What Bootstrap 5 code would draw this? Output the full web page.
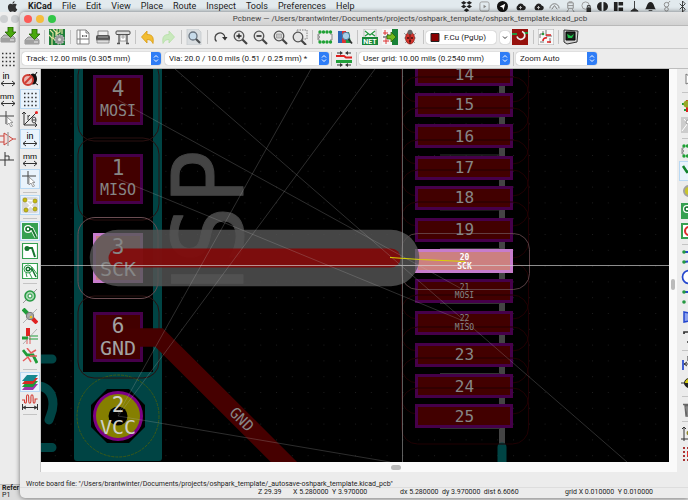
<!DOCTYPE html>
<html lang="en">
<head>
<meta charset="utf-8">
<meta name="viewport" content="width=device-width, initial-scale=1">
<title>Pcbnew</title>
<link href="https://cdn.jsdelivr.net/npm/bootstrap@5.3.0/dist/css/bootstrap.min.css" rel="stylesheet">
<style>
body{font-family:Roboto,"Liberation Sans",sans-serif;font-size:8px;line-height:12px;color:#222;background:#d4d4d4}
button{border:0;padding:0;background:none;color:inherit}
.menubar{height:12px;background:#e2eaee;font-size:9px;line-height:10px;color:#1c1c1c;padding-left:7px}
.menubar a{color:inherit;text-decoration:none}
.menu-names{gap:10px;margin-left:10px}
.menu-extras{gap:5px}
.menu-extras svg,.apple{width:11px;height:11px;display:block}
.menu-extras svg:nth-child(-n+4){margin-right:2px}
.back-win{background:linear-gradient(90deg,#ececec 60%,#bdbdbd)}
.back-side{width:20px}
.back-title{height:15px;background:#eee;gap:3px;padding-top:3px}
.dot{width:8px;height:8px;border-radius:50%}
.back-tool{height:16px;margin-bottom:4px;width:16px}
.back-tool svg{width:16px;height:16px;display:block}
.back-list{font-size:7px;line-height:7px;background:#dcdcdc;height:16px;border-top:1px solid #bbb;padding-left:2px}
.front-win{left:20px;right:0;top:12px;bottom:2px;background:#ececec;border-radius:5px 0 0 5px;box-shadow:0 0 5px #0008;overflow:hidden}
.titlebar{height:14px;background:linear-gradient(#e4e4e4,#d2d2d2);border-bottom:1px solid #b9b9b9;padding-left:4px;color:#444}
.win-name{padding-left:76px}
.toolrow{height:22px;padding-left:2px}
.optrow{height:21px;border-top:1px solid #cacaca;border-bottom:1px solid #bdbdbd;padding-left:2px}
.tool{width:20px;height:20px;flex:none;display:flex;align-items:center;justify-content:center;border:1px solid transparent}
.tool svg{width:16px;height:16px;display:block;flex:none}
.tool.on{background:#e9f3fc;border-color:#b9d9f4}
.bar-a,.bar-b{flex:none;display:flex;align-items:center;justify-content:center}
.bar-a{width:5px}.bar-b{width:6px}
.bar-a::after,.bar-b::after{content:"";width:1px;height:14px;background:#c4c4c4}
.vtools .bar-a,.vtools .bar-b{width:20px}
.vtools .bar-a{height:5px}.vtools .bar-b{height:6px}
.vtools .bar-a::after,.vtools .bar-b::after{width:14px;height:1px}
.vtools{background:#ececec}
.left-tools{width:21px;border-right:1px solid #c8c8c8}
.right-tools{width:11px;overflow:hidden;padding-left:2px}
.combo{height:13px;background:#fff;border-radius:3px;box-shadow:0 0 1px #0007;display:flex;overflow:hidden}
.combo select{appearance:none;border:0;background:transparent;padding:0 0 0 4px;font-size:8px;line-height:13px;color:#1c1c1c;min-width:0;flex:1}
.combo svg{width:10px;height:13px;flex:none}
.w-track{width:139px}.w-via{width:164px}.w-grid{width:151px}.w-zoom{width:81px}.w-layer{width:70px}
.board{background:#000;min-width:0}
.board svg{display:block;width:100%;height:100%}
.canvas-col{min-width:0}
.vscroll{width:8px;background:#fafafa;padding-top:210px}
.vscroll span{display:block;width:4px;height:11px;border-radius:2px;background:#bbb;margin:auto}
.hscroll{height:10px;background:#fafafa;padding-top:3px}
.hscroll span{display:block;width:10px;height:5px;border-radius:3px;background:#bbb;margin-left:55%}
.status{height:26px;font-size:7px;line-height:8px;color:#222}
.status div,.status span{white-space:pre}
.message{height:16px;padding:8px 0 0 6px;border-bottom:1px solid #ddd}
.coords{padding-left:238px}
.c-z{width:35px}.c-xy{width:107px}.c-d{width:165px}
.pcb{font-family:"DejaVu Sans Mono",monospace;text-anchor:middle;fill:#868686}
.silk{font-family:"DejaVu Sans Condensed","DejaVu Sans",sans-serif;font-size:98px}
</style>
<script src="https://cdn.jsdelivr.net/npm/bootstrap@5.3.0/dist/js/bootstrap.bundle.min.js"></script>
</head>
<body class="vh-100 d-flex flex-column overflow-hidden position-relative">
<svg class="d-none" aria-hidden="true">
<defs>
<symbol id="save" viewBox="0 0 16 16"><path d="M4 8h8l3 3v4H1v-4z" fill="#b9b9b9" stroke="#777" stroke-width=".7"/><path d="M1 11h14v4H1z" fill="#a0a0a0"/><path d="M10 13h4" stroke="#eee"/><path d="M8 0h5v5h3l-5.500 5.500L5 5h3z" fill="#4aa80c" stroke="#1e5c00" stroke-width=".8"/></symbol>
<symbol id="boardset" viewBox="0 0 16 16"><path d="M0 0h16v16H0z" fill="#1d7d38"/><path d="M1 1l3 3v5l3 3M4 0l3 3v4M8 0v5l3-2V0M13 0v5M0 6l3 3v7" stroke="#e5e2a0" stroke-width="1.200" fill="none"/><circle cx="10.500" cy="10.500" r="4.500" fill="#999" stroke="#bbb" stroke-width="1.500" stroke-dasharray="1.500 1"/><circle cx="10.500" cy="10.500" r="1.500" fill="#ddd"/></symbol>
<symbol id="page" viewBox="0 0 16 16"><path d="M2 1h9l3 3v11H2z" fill="#fff" stroke="#888"/><path d="M11 1v3h3M5 1v14M2 10h12" stroke="#777" fill="none"/><path d="M7 7h5M8 6l-1 1 1 1M11 6l1 1-1 1" stroke="#555" fill="none" stroke-width=".8"/></symbol>
<symbol id="print" viewBox="0 0 16 16"><path d="M3 2h10v5H3z" fill="#eee" stroke="#888"/><rect x="1" y="6" width="14" height="6" rx="2" fill="#555"/><path d="M2 11h12v3H2z" fill="#ddd" stroke="#777" stroke-width=".7"/><path d="M3 8h10" stroke="#aaa"/></symbol>
<symbol id="plot" viewBox="0 0 16 16"><rect x="1" y="2" width="14" height="3.500" rx="1" fill="#ddd" stroke="#444"/><path d="M4 5v9M12 5v9M2 14.500h3M11 14.500h3" stroke="#555" stroke-width="1.300"/><path d="M5 6h6v6H5z" fill="#fff" stroke="#777" stroke-width=".7"/><path d="M6 8h4M8 6v4" stroke="#888" stroke-width=".7"/></symbol>
<symbol id="undo" viewBox="0 0 16 16"><path d="M7 2v3.500c5 0 7 2 6 9-1.500-3-3-4-6-4V14L1.500 8z" fill="#f2bd33" stroke="#d89a12" stroke-width=".8"/></symbol>
<symbol id="find" viewBox="0 0 16 16"><path d="M1 0h11l3 3v13H1z" fill="#d9dde0" stroke="#c3c7ca" stroke-width=".7"/><circle cx="7" cy="7" r="4" fill="#c7dbea" stroke="#697480" stroke-width="1.300"/><path d="M10 10l4 4" stroke="#4d5154" stroke-width="2.200"/></symbol>
<symbol id="refresh" viewBox="0 0 16 16"><path d="M4.500 12.500A5 5 0 1 1 13 9" fill="none" stroke="#444" stroke-width="1.300"/><path d="M10 8h5.500L13 11.500z" fill="#333"/></symbol>
<symbol id="lens" viewBox="0 0 16 16"><circle cx="7" cy="7" r="4.800" fill="#e4e4e4" stroke="#555" stroke-width="1.300"/><path d="M10.500 10.500L15 15" stroke="#444" stroke-width="2.200"/></symbol>
<symbol id="zin" viewBox="0 0 16 16"><use href="#lens"/><path d="M4.500 7h5M7 4.500v5" stroke="#222" stroke-width="1.300"/></symbol>
<symbol id="zout" viewBox="0 0 16 16"><use href="#lens"/><path d="M4.500 7h5" stroke="#222" stroke-width="1.300"/></symbol>
<symbol id="zfit" viewBox="0 0 16 16"><use href="#lens"/><path d="M4.500 5h5v4h-5z" fill="#c4c4c4" stroke="#999" stroke-width=".7"/></symbol>
<symbol id="zsel" viewBox="0 0 16 16"><path d="M5 1h10v9H5z" fill="none" stroke="#666" stroke-width=".8" stroke-dasharray="1.500 1"/><use href="#lens" y="1" x="-1"/></symbol>
<symbol id="chip" viewBox="0 0 16 16"><path d="M3 5H1v6h2M13 5h2v6h-2M1 6.500a1.500 1.500 0 0 1 0 3" fill="none" stroke="#888"/><g fill="#1fa135"><circle cx="3" cy="3" r="1.700"/><circle cx="6.500" cy="3" r="1.700"/><circle cx="10" cy="3" r="1.700"/><circle cx="13.500" cy="3" r="1.700"/><circle cx="3" cy="13" r="1.700"/><circle cx="6.500" cy="13" r="1.700"/><circle cx="10" cy="13" r="1.700"/><circle cx="13.500" cy="13" r="1.700"/></g></symbol>
<symbol id="lib" viewBox="0 0 16 16"><path d="M1 2h4v12H1z" fill="#2c65b8"/><path d="M5 2h4v12H5z" fill="#d33"/><path d="M8 4l4-1 2 11h-5z" fill="#1d9a44"/><circle cx="9" cy="7" r="3.700" fill="#a8cee8" stroke="#5077a0"/><path d="M11.500 10l3.500 4.500" stroke="#333" stroke-width="1.800"/></symbol>
<symbol id="net" viewBox="0 0 16 16"><path d="M2 0h12v10H2z" fill="#f3f3f3" stroke="#aaa" stroke-width=".7"/><path d="M3 2l5 4 5-4M3 7l3-2M13 7l-3-2" fill="none" stroke="#279941" stroke-width="1.300"/><path d="M0 8h16v8H0z" fill="#198838"/></symbol>
<symbol id="update" viewBox="0 0 16 16"><path d="M0 0h16v16H0z" fill="#f5f5f5"/><path d="M10 0h6v16h-6z" fill="#188137"/><path d="M1 4h5M3 1v5M1 12h6M4 9v6" stroke="#d33"/><path d="M1 8h4l1-3" stroke="#333" fill="none"/><path d="M5 6h4V3l5 5-5 5v-3H5z" fill="#73b91c" stroke="#245c05" stroke-width=".7"/></symbol>
<symbol id="bug" viewBox="0 0 16 16"><path d="M2 4l3 3M14 4l-3 3M2 9h12M3 14l3-3M13 14l-3-3" stroke="#888" stroke-width=".8"/><ellipse cx="8" cy="9" rx="4.500" ry="6" fill="#d2342c" stroke="#8a1814" stroke-width=".7"/><circle cx="8" cy="3.200" r="2.500" fill="#666"/><path d="M8 5v10" stroke="#611"/><circle cx="6" cy="9" r="1" fill="#411"/><circle cx="10" cy="9" r="1" fill="#411"/><circle cx="8" cy="12" r="1" fill="#411"/></symbol>
<symbol id="via" viewBox="0 0 16 16"><path d="M0 0h16v16H0z" fill="#97120e"/><path d="M0 4h5v2H0zM11 3h5v2h-5z" fill="#24953c"/><path d="M10 2.500a4 4 0 1 1-5 5" fill="none" stroke="#eee" stroke-width="1.700"/></symbol>
<symbol id="route" viewBox="0 0 16 16"><path d="M0 0h16v16H0z" fill="#f8f8f8" stroke="#aaa"/><path d="M5 2v3H2v4M8 1v6h6M2 13h4M12 9v5" stroke="#555" fill="none" stroke-width=".8"/><path d="M8 6h5M5 12a3 3 0 0 1 4-3M9 13h4" stroke="#d22" stroke-width="1.700" fill="none"/><circle cx="5" cy="5" r="1.300" fill="#2a9a3a"/></symbol>
<symbol id="term" viewBox="0 0 16 16"><path d="M1 1l14 1-1 11-10 2-3-2z" fill="#d0d0d0" stroke="#333"/><path d="M3 3h9v8H3z" fill="#19251b" stroke="#000"/><path d="M4 5l4 2 3-2-2 4H5z" fill="#1ec24a"/></symbol>
<symbol id="pair" viewBox="0 0 16 16"><path d="M0 5h8l2 1.500h6" fill="none" stroke="#e02020" stroke-width="2"/><path d="M0 10.500h16" fill="none" stroke="#22a03a" stroke-width="3"/><path d="M1 2h4M11 2h4M1 14h4M11 14h4" stroke="#333"/><path d="M4 0l3 2-3 2zM12 0L9 2l3 2zM4 12l3 2-3 2zM12 12l-3 2 3 2z" fill="#333"/></symbol>
<symbol id="nobug" viewBox="0 0 16 16"><path d="M7 3l2 2M15 1l-2 3M15 8h-4M16 14l-4-3" stroke="#111"/><ellipse cx="11" cy="8" rx="4" ry="5.500" fill="#111"/><circle cx="6" cy="9" r="5" fill="#e9b5b1" stroke="#cf3b32" stroke-width="2"/><path d="M3 12l6-6" stroke="#cf3b32" stroke-width="2"/></symbol>
<symbol id="dots" viewBox="0 0 16 16"><path d="M2 2.500h13M2 6.500h13M2 10.500h13M2 14.500h13" stroke="#333" stroke-width="1.500" stroke-dasharray="1.500 2.200"/></symbol>
<symbol id="polar" viewBox="0 0 16 16"><path d="M2 1v13h13M0 3l2-2 2 2M13 12l2 2-2 2M2 14L14 2" fill="none" stroke="#333"/><path d="M6 9V4M6 6l2-2" stroke="#444"/><ellipse cx="12" cy="9" rx="2" ry="3" fill="none" stroke="#444"/><path d="M10 9h4" stroke="#444"/><circle cx="14.500" cy="1.500" r="1.500" fill="#e22"/></symbol>
<symbol id="span" viewBox="0 0 16 16"><path d="M1 12.500h14M4 10l-3 2.500L4 15M12 10l3 2.500-3 2.500" fill="none" stroke="#333"/></symbol>
<symbol id="cursor" viewBox="0 0 16 16"><path d="M0 5h14M6 0v13" stroke="#444"/><path d="M7 6v8l2-2 2 4 1.500-1-2-3.500H13z" fill="#fff" stroke="#888" stroke-width=".8"/></symbol>
<symbol id="rats" viewBox="0 0 16 16"><rect width="16" height="16" rx="2" fill="#d9d9d9"/><path d="M3 3l10 10M13 4L4 13M3 3l10 1" stroke="#fff" stroke-width="1.300"/><g fill="#c9bd0c" stroke="#888100" stroke-width=".6"><circle cx="3" cy="3" r="2"/><circle cx="13" cy="4" r="2"/><circle cx="4" cy="13" r="2"/><circle cx="13" cy="12" r="2"/></g></symbol>
<symbol id="zone1" viewBox="0 0 16 16"><path d="M0 0h16v16H0z" fill="#36a050"/><path d="M6 6h4l4 8" stroke="#fff" fill="none" stroke-width="3.500"/><circle cx="6" cy="6" r="4" fill="#fff"/><circle cx="6" cy="6" r="2" fill="none" stroke="#16752f" stroke-width="1.600"/><path d="M8 6h2l4 8" fill="none" stroke="#16752f" stroke-width="1.800"/></symbol>
<symbol id="zone2" viewBox="0 0 16 16"><path d="M.5.5h15v15H.500z" fill="#fff" stroke="#36a050" stroke-width="1.200"/><circle cx="5" cy="5.500" r="2.500" fill="#16752f"/><path d="M5 5h5l3 9" fill="none" stroke="#16752f" stroke-width="2"/></symbol>
<symbol id="zone3" viewBox="0 0 16 16"><path d="M.5.5h15v15H.500z" fill="#fff" stroke="#36a050" stroke-width="1.200"/><circle cx="6" cy="6" r="4" fill="none" stroke="#36a050"/><path d="M10 4l5 7M4 10l1 4M7 9l3 6" stroke="#36a050"/><circle cx="6" cy="6" r="1.800" fill="none" stroke="#16752f" stroke-width="1.500"/><path d="M8 6h2l4 8" fill="none" stroke="#16752f" stroke-width="1.500"/></symbol>
<symbol id="padoff" viewBox="0 0 16 16"><path d="M1 15L15 1" stroke="#999"/><circle cx="8" cy="8" r="5" fill="#a7d8b1" stroke="#249840" stroke-width="1.500"/><circle cx="8" cy="8" r="2" fill="#fff" stroke="#249840"/></symbol>
<symbol id="viaoff" viewBox="0 0 16 16"><path d="M1 1l5 5" stroke="#1e9c38" stroke-width="4"/><path d="M9 9l6 6" stroke="#e02222" stroke-width="4"/><circle cx="8" cy="8" r="3.700" fill="#aaa" stroke="#777"/><circle cx="9" cy="9" r="1.300" fill="#edc11c"/><path d="M1 15L15 1" stroke="#999" stroke-width=".7"/></symbol>
<symbol id="trkoff" viewBox="0 0 16 16"><path d="M6 0v8" stroke="#e02222" stroke-width="4"/><path d="M5 8v8M8 8v8" stroke="#e06060"/><path d="M0 10h6" stroke="#1e9c38" stroke-width="3"/><path d="M7 8h9M7 11h9" stroke="#1e9c38"/><path d="M1 16L15 1" stroke="#999" stroke-width=".7"/></symbol>
<symbol id="mixed" viewBox="0 0 16 16"><path d="M1 2l4 5h6l4 8" stroke="#1e9c38" stroke-width="2.800" fill="none"/><path d="M5 0l4 5 5-3M1 13l5-4 3 5M8 8h7" stroke="#e85b5b" stroke-width="1.500" fill="none"/></symbol>
<symbol id="layers" viewBox="0 0 16 16"><path d="M5 10h11l-5 6H0z" fill="#9d35ab"/><path d="M5 7h11l-5 6H0z" fill="#1c9b3b"/><path d="M5 4h11l-5 6H0z" fill="#d42b24"/><path d="M5 1h11l-5 6H0z" fill="#168891"/></symbol>
<symbol id="tune" viewBox="0 0 16 16"><path d="M0 6h2.500V9M2.500 7c0 3 2 3 2 0V3c0-3 2.200-3 2.200 0v4c0 3 2.200 3 2.200 0V3c0-3 2.200-3 2.200 0v4c0 3 2 3 2 0V5h2.500" fill="none" stroke="#d23c34" stroke-width="1.100"/><path d="M.500 10v6M15.500 10v6M1 13.500h14M4 12l-3 1.500L4 15M12 12l3 1.500-3 1.500" fill="none" stroke="#333"/></symbol>
<symbol id="updown" viewBox="0 0 10 13"><path d="M0 0h10v13H0z" fill="#2f7df6"/><path d="M3 5.500l2-2 2 2M3 7.500l2 2 2-2" fill="none" stroke="#fff"/></symbol>
<symbol id="opamp" viewBox="0 0 16 16"><path d="M4 2l9 6-9 6zM0 5h4M0 11h4M13 8h3" fill="#f6dcda" stroke="#c8443c"/><path d="M8 1v14" stroke="#aaa" stroke-width="1.500"/></symbol>
</defs>
</svg>

<nav class="menubar d-flex align-items-center flex-shrink-0" aria-label="Menu bar">
<svg class="apple" viewBox="0 0 16 16"><path d="M11 4c2 0 3 1 3.500 1.500-3 2-2 5.500.5 6.500-1 2.500-2.500 4-3.500 4-1.500 0-2-.700-3.500-.700S6 16 5 16C2 15 0 8 2.500 5.500 4.500 3 6.500 4.500 8 4.700 9 4.700 10 4 11 4zM8 4c0-2 1-3.500 3-4 0 2-1 3.700-3 4z" fill="#333"/></svg>
<div class="menu-names d-flex"><a href="#" class="fw-bold">KiCad</a><a href="#">File</a><a href="#">Edit</a><a href="#">View</a><a href="#">Place</a><a href="#">Route</a><a href="#">Inspect</a><a href="#">Tools</a><a href="#">Preferences</a><a href="#">Help</a></div>
<div class="menu-extras d-flex ms-auto" aria-hidden="true">
<svg viewBox="0 0 12 12"><path d="M3 0l3 2-3 2-3-2zM9 0l3 2-3 2-3-2zM3 4l3 2-3 2-3-2zM9 4l3 2-3 2-3-2zM6 8l3 2-3 2-3-2z" fill="#222"/></svg>
<svg viewBox="0 0 12 12"><rect x="1" y="1" width="10" height="10" rx="2" fill="none" stroke="#999"/><path d="M5 4l3 2-3 2z" fill="#888"/></svg>
<svg viewBox="0 0 12 12"><circle cx="6" cy="6" r="6" fill="#111"/><path d="M3 6l6-3-2 7-1-3z" fill="#fff"/></svg>
<svg viewBox="0 0 12 12"><path d="M3 10a3 3 0 0 1 0-5 3.500 3.500 0 0 1 6.500 0A2.500 2.500 0 0 1 9 10z" fill="#222"/><path d="M6 9V6M4.500 7.500L6 6l1.500 1.500" stroke="#fff" fill="none" stroke-width=".8"/></svg>
<svg viewBox="0 0 12 12"><path d="M3 10a3 3 0 0 1 0-5 3.500 3.500 0 0 1 6.500 0A2.500 2.500 0 0 1 9 10z" fill="#222"/><path d="M6 9V6M4.500 7.500L6 6l1.500 1.500" stroke="#fff" fill="none" stroke-width=".8"/></svg>
<svg viewBox="0 0 12 12"><path d="M1 8a5 5 0 1 1 10 0M3 9l3-4 3 4" fill="none" stroke="#777"/></svg>
<svg viewBox="0 0 12 12"><path d="M3 2h6v6H3zM3 5h6M4 9l-2 3M8 9l2 3M4 1h4" fill="none" stroke="#888"/></svg>
<svg viewBox="0 0 12 12"><circle cx="5" cy="5" r="4" fill="none" stroke="#999"/><path d="M6 7h5v5H6z" fill="#333"/><path d="M7 7V5h3v2" fill="none" stroke="#333"/></svg>
<svg viewBox="0 0 12 12"><path d="M5 1v10a5 5 0 0 1 0-10zM7 1a5 5 0 0 1 0 10z" fill="#222"/></svg>
<svg viewBox="0 0 12 12"><path d="M1 1h4v10H1zM6 1h5v4H6zM6 7h5v4H6z" fill="#222"/></svg>
<svg viewBox="0 0 12 12"><path d="M6 0v9M2 11l4-3 4 3z" stroke="#333" fill="#333"/></svg>
<svg viewBox="0 0 12 12"><path d="M0 9c2-1 2-8 6-8s4 7 6 8zM4 10h4v1H4z" fill="#222"/></svg>
<svg viewBox="0 0 12 12"><circle cx="6" cy="4" r="2.500" fill="none" stroke="#888"/><circle cx="6" cy="9" r="2" fill="none" stroke="#888"/><path d="M8 2l2-2" stroke="#888"/></svg>
<svg viewBox="0 0 12 12"><path d="M3 3l6 6-3 3V0l3 3-6 6" fill="none" stroke="#333"/></svg>
</div>
</nav>

<section class="back-win flex-grow-1 d-flex flex-column" aria-label="Schematic window">
<div class="back-side flex-grow-1">
<div class="back-title d-flex"><span class="dot bg-secondary bg-opacity-25"></span><span class="dot bg-secondary bg-opacity-25"></span></div>
<div class="back-tool"><svg><use href="#save"/></svg></div>
<div class="back-tool mt-2"><svg><use href="#dots"/></svg></div>
<div class="back-tool"><svg viewBox="0 0 16 16"><use href="#span"/><text x="6" y="8" font-size="9" text-anchor="middle">in</text></svg></div>
<div class="back-tool"><svg viewBox="0 0 16 16"><use href="#span"/><text x="7" y="8" font-size="8" text-anchor="middle">mm</text></svg></div>
<div class="back-tool"><svg><use href="#cursor"/></svg></div>
<div class="back-tool"><svg><use href="#opamp"/></svg></div>
<div class="back-tool"><svg viewBox="0 0 16 16"><path d="M0 9h14M5 1v14M5 5h4v4" fill="none" stroke="#333"/></svg></div>
</div>
<div class="back-list"><div class="fw-bold">Refer</div><div>P1</div></div>
</section>

<main class="front-win position-absolute d-flex flex-column">
<header class="titlebar d-flex align-items-center flex-shrink-0">
<span class="d-flex gap-1"><span class="dot" style="background:#fc5b57"></span><span class="dot" style="background:#f5bd3c"></span><span class="dot" style="background:#32c748"></span></span>
<span class="win-name flex-grow-1 text-center text-nowrap overflow-hidden">Pcbnew — /Users/brantwinter/Documents/projects/oshpark_template/oshpark_template.kicad_pcb</span>
</header>
<div class="toolrow d-flex align-items-center flex-shrink-0" role="toolbar" aria-label="Main tools">
<button class="tool" aria-label="Save"><svg><use href="#save"/></svg></button><i class="bar-a"></i>
<button class="tool" aria-label="Board setup"><svg><use href="#boardset"/></svg></button><i class="bar-b"></i>
<button class="tool" aria-label="Page settings"><svg><use href="#page"/></svg></button>
<button class="tool" aria-label="Print"><svg><use href="#print"/></svg></button>
<button class="tool" aria-label="Plot"><svg><use href="#plot"/></svg></button><i class="bar-a"></i>
<button class="tool" aria-label="Undo"><svg><use href="#undo"/></svg></button>
<button class="tool" aria-label="Redo"><svg viewBox="0 0 16 16"><path d="M9 2v3.500c-5 0-7 2-6 9 1.500-3 3-4 6-4V14l5.500-6z" fill="#c9e9bd" stroke="#b5dfa6" stroke-width=".8"/></svg></button><i class="bar-b"></i>
<button class="tool" aria-label="Find"><svg><use href="#find"/></svg></button><i class="bar-b"></i>
<button class="tool" aria-label="Refresh"><svg><use href="#refresh"/></svg></button>
<button class="tool" aria-label="Zoom in"><svg><use href="#zin"/></svg></button>
<button class="tool" aria-label="Zoom out"><svg><use href="#zout"/></svg></button>
<button class="tool" aria-label="Zoom to fit"><svg><use href="#zfit"/></svg></button>
<button class="tool" aria-label="Zoom to selection"><svg><use href="#zsel"/></svg></button><i class="bar-a"></i>
<button class="tool" aria-label="Footprint editor"><svg><use href="#chip"/></svg></button>
<button class="tool" aria-label="Footprint viewer"><svg><use href="#lib"/></svg></button><i class="bar-a"></i>
<button class="tool" aria-label="Load netlist"><svg viewBox="0 0 16 16"><use href="#net"/><text x="8" y="15" font-size="7" font-weight="700" text-anchor="middle" fill="#fff">NET</text></svg></button>
<button class="tool" aria-label="Update board"><svg><use href="#update"/></svg></button>
<button class="tool" aria-label="Rules check"><svg><use href="#bug"/></svg></button><i class="bar-b"></i>
<label class="combo w-layer align-items-center"><svg class="ms-1" viewBox="0 0 10 13"><path d="M1 2.500h8v8H1z" fill="#8a0000" stroke="#222"/></svg><select aria-label="Layer"><option>F.Cu (PgUp)</option></select></label>
<button class="combo align-items-center justify-content-center ms-1" aria-label="Open layer list"><svg viewBox="0 0 10 13"><path d="M3 5.500l2 2 2-2" fill="none" stroke="#333"/></svg></button>
<button class="tool" aria-label="Layer pair"><svg><use href="#via"/></svg></button><i class="bar-b"></i>
<button class="tool" aria-label="Autoroute mode"><svg><use href="#route"/></svg></button><i class="bar-a"></i>
<button class="tool" aria-label="Scripting console"><svg><use href="#term"/></svg></button>
</div>
<div class="optrow d-flex align-items-center flex-shrink-0">
<label class="combo w-track"><select aria-label="Track width"><option>Track: 12.00 mils (0.305 mm)</option></select><svg><use href="#updown"/></svg></label>
<label class="combo w-via ms-1"><select aria-label="Via size"><option>Via: 20.0 / 10.0 mils (0.51 / 0.25 mm) *</option></select><svg><use href="#updown"/></svg></label>
<i class="bar-a"></i><button class="tool" aria-label="Track width from existing"><svg><use href="#pair"/></svg></button><i class="bar-a"></i>
<label class="combo w-grid"><select aria-label="Grid"><option>User grid: 10.00 mils (0.2540 mm)</option></select><svg><use href="#updown"/></svg></label><i class="bar-b"></i>
<label class="combo w-zoom"><select aria-label="Zoom"><option>Zoom Auto</option></select><svg><use href="#updown"/></svg></label>
</div>
<div class="flex-grow-1 d-flex overflow-hidden">
<div class="left-tools vtools flex-shrink-0" role="toolbar" aria-label="Display options">
<button class="tool" aria-label="Rules off"><svg><use href="#nobug"/></svg></button>
<button class="tool on" aria-label="Grid"><svg><use href="#dots"/></svg></button>
<button class="tool" aria-label="Polar"><svg><use href="#polar"/></svg></button>
<button class="tool on" aria-label="Inches"><svg viewBox="0 0 16 16"><use href="#span"/><text x="8" y="8" font-size="9" text-anchor="middle">in</text></svg></button>
<button class="tool" aria-label="Millimetres"><svg viewBox="0 0 16 16"><use href="#span"/><text x="8" y="8" font-size="8" text-anchor="middle">mm</text></svg></button>
<button class="tool on" aria-label="Cursor shape"><svg><use href="#cursor"/></svg></button><i class="bar-b"></i>
<button class="tool on" aria-label="Ratsnest"><svg><use href="#rats"/></svg></button><i class="bar-b"></i>
<button class="tool on" aria-label="Filled zones"><svg><use href="#zone1"/></svg></button>
<button class="tool" aria-label="Hide zones"><svg><use href="#zone2"/></svg></button>
<button class="tool" aria-label="Zone outlines"><svg><use href="#zone3"/></svg></button><i class="bar-a"></i>
<button class="tool" aria-label="Pad outlines"><svg><use href="#padoff"/></svg></button>
<button class="tool" aria-label="Via outlines"><svg><use href="#viaoff"/></svg></button>
<button class="tool" aria-label="Track outlines"><svg><use href="#trkoff"/></svg></button>
<button class="tool" aria-label="High contrast"><svg><use href="#mixed"/></svg></button><i class="bar-b"></i>
<button class="tool on" aria-label="Layers"><svg><use href="#layers"/></svg></button>
<button class="tool" aria-label="Microwave"><svg><use href="#tune"/></svg></button><i class="bar-a"></i>
</div>
<div class="canvas-col flex-grow-1 d-flex flex-column">
<div class="flex-grow-1 d-flex overflow-hidden">
<div class="board flex-grow-1 overflow-hidden">
<svg viewBox="41 69 628 393" preserveAspectRatio="xMinYMin slice" role="img" aria-label="Board canvas">
<defs>
<pattern id="gridpts" x="276" y="76" width="15.800" height="15.800" patternUnits="userSpaceOnUse"><path d="M0 0h1v1H0z" fill="#1c1c1c"/></pattern>
<g id="rpad"><rect x="401.500" y="-16" width="127" height="56" rx="16" fill="none" stroke="#200003"/><rect x="416.500" y="1.500" width="95" height="21" fill="#420000" stroke="#46004a" stroke-width="3"/></g>
<g id="lpad"><rect x="78" y="-16" width="81" height="82" rx="16" fill="none" stroke="#2a1010"/><rect x="94.500" y="1.500" width="47" height="47" fill="#420000" stroke="#46004a" stroke-width="3"/></g>
</defs>
<path d="M41 69h628v393H41z" fill="#000"/><path d="M41 69h628v393H41z" fill="url(#gridpts)"/>
<path d="M74 60h88v398q0 3-3 3H77q-3 0-3-3z" fill="#004444"/>
<path d="M83 60h70v312H83z" fill="#000"/>
<path d="M30 359h22M30 447.500h22M30 386c18-2 23 8 23 18 0 8-3 12-4 16" fill="none" stroke="#004444" stroke-width="9" stroke-linecap="round"/>
<path d="M107 389h22l16 16v22l-16 16h-22l-16-16v-22z" fill="#000"/>
<circle cx="118" cy="416" r="23.500" fill="#857f00" stroke="#7c0085" stroke-width="3"/><circle cx="118" cy="416" r="9.500" fill="#000"/>
<circle cx="118" cy="416" r="41" fill="none" stroke="#3c5a16" stroke-dasharray="3 1"/>
<use href="#lpad" y="75"/><use href="#lpad" y="154"/><use href="#lpad" y="312"/>
<rect x="78" y="217.500" width="80" height="81" rx="17" fill="none" stroke="#6b4d52"/>
<path d="M94.500 234.500h47v47h-47z" fill="#c88080" stroke="#c77ccc" stroke-width="3"/>
<path d="M118 337.500h41L300 478" fill="none" stroke="#460000" stroke-width="18.500"/>
<text class="silk" transform="translate(243 292) rotate(-90)" x="0 29 88" fill="#444" stroke="#444" stroke-linejoin="round">ISP</text>
<path d="M499 69h6v380h-6z" fill="#444"/><path d="M497.500 470V447a4.500 4.500 0 0 1 9 0v23z" fill="#004444"/>
<path d="M440 117h60M440 155h60M440 210h60M440 248.500h60M440 303.500h60M440 373.500h60M440 428.500h60" stroke="#333"/>
<use href="#rpad" y="62"/><use href="#rpad" y="93"/><use href="#rpad" y="124"/><use href="#rpad" y="156"/><use href="#rpad" y="186"/><use href="#rpad" y="218"/><use href="#rpad" y="279"/><use href="#rpad" y="311"/><use href="#rpad" y="343"/><use href="#rpad" y="374"/><use href="#rpad" y="404"/>
<rect x="401.500" y="233.500" width="128" height="56" rx="16" fill="none" stroke="#6b4d52" stroke-opacity=".8"/>
<path d="M416.500 250.500h95v21h-95z" fill="#cc8080" stroke="#c77ccc" stroke-width="3"/>
<path d="M118 258h273" stroke="#545454" stroke-opacity=".82" stroke-width="56.500" stroke-linecap="round"/>
<path d="M118 258h273" stroke="#840606" stroke-opacity=".88" stroke-width="19" stroke-linecap="round"/>
<g stroke="#bbb" stroke-opacity=".27" stroke-width=".9"><path d="M175 69L627 462M118 100l342 188M118 179l343 141M311 69L118 414M375 69L118 416M118 416l272 46" fill="none"/></g>
<g class="pcb">
<text x="118" y="96" font-size="21">4</text><text x="118" y="116" font-size="15">MOSI</text>
<text x="118" y="175" font-size="21">1</text><text x="118" y="195" font-size="15">MISO</text>
<text x="118" y="254" font-size="21">3</text><text x="118" y="276" font-size="20">SCK</text>
<g fill="#a2a2a2"><text x="118" y="333" font-size="21">6</text><text x="118" y="355" font-size="20">GND</text></g>
<g fill="#d0d0c8"><text x="118" y="412" font-size="21">2</text><text x="118" y="434" font-size="20">VCC</text></g>
<text transform="translate(238 423) rotate(45)" font-size="15">GND</text>
<g font-size="16"><text x="464.500" y="80">14</text><text x="464.500" y="110">15</text><text x="464.500" y="142">16</text><text x="464.500" y="173">17</text><text x="464.500" y="203">18</text><text x="464.500" y="235">19</text><text x="464.500" y="360">23</text><text x="464.500" y="392">24</text><text x="464.500" y="422">25</text></g>
<g font-size="8"><g fill="#fff" font-weight="700"><text x="464.500" y="260">20</text><text x="464.500" y="269">SCK</text></g><text x="464.500" y="290">21</text><text x="464.500" y="298">MOSI</text><text x="464.500" y="321">22</text><text x="464.500" y="330">MISO</text></g>
</g>
<path d="M41 265.500h628" stroke="#d8d8d8" stroke-opacity=".65"/><path d="M402.500 69v393" stroke="#aaa" stroke-opacity=".55"/>
<path d="M390 257.500l30 2 45 2" fill="none" stroke="#d8d400" stroke-width="1.200"/>
</svg>
</div>
<div class="vscroll flex-shrink-0"><span></span></div>
</div>
<div class="hscroll flex-shrink-0"><span></span></div>
</div>
<div class="right-tools vtools flex-shrink-0" role="toolbar" aria-label="Drawing tools">
<button class="tool" aria-label="Select"><svg viewBox="0 0 16 16"><path d="M5 3l9 6-9 4z" fill="#fff" stroke="#777"/></svg></button><i class="bar-b"></i>
<button class="tool" aria-label="Highlight net"><svg viewBox="0 0 16 16"><path d="M1 7h4M3 13h3" stroke="#1e9c38" stroke-width="2"/><path d="M5 3h7v12H5z" fill="#d22"/><circle cx="6" cy="7" r="3.500" fill="#99a829"/></svg></button>
<button class="tool" aria-label="Local ratsnest"><svg viewBox="0 0 16 16"><path d="M0 0h16v16H0z" fill="#ccc"/><path d="M1 14L10 2M3 2l6 7" stroke="#fff"/><circle cx="7" cy="5" r="2" fill="#fff" stroke="#999"/></svg></button><i class="bar-b"></i>
<button class="tool" aria-label="Add footprint"><svg><use href="#chip"/></svg></button>
<button class="tool on" aria-label="Route track"><svg viewBox="0 0 16 16"><path d="M2 3l4 6 7-2" fill="none" stroke="#12832c" stroke-width="2.500"/></svg></button>
<button class="tool" aria-label="Add via"><svg viewBox="0 0 16 16"><circle cx="8" cy="8" r="5" fill="#c9c52c" stroke="#a0a0a0" stroke-width="2"/></svg></button>
<button class="tool" aria-label="Add zone"><svg><use href="#zone1"/></svg></button>
<button class="tool" aria-label="Add keepout"><svg viewBox="0 0 16 16"><path d="M1 1h14v14H1z" fill="#fff" stroke="#36a050" stroke-width="2"/><circle cx="8" cy="8" r="4" fill="none" stroke="#dc2d2d" stroke-width="2"/></svg></button><i class="bar-b"></i>
<button class="tool" aria-label="Line"><svg viewBox="0 0 16 16"><path d="M3 3h8M3 13l8-1" stroke="#2447ce" stroke-width="2"/><circle cx="3" cy="3" r="1.800" fill="#249840"/><circle cx="3" cy="13" r="1.800" fill="#249840"/></svg></button>
<button class="tool" aria-label="Circle"><svg viewBox="0 0 16 16"><circle cx="8" cy="8" r="6.500" fill="#fff" stroke="#2447ce" stroke-width="1.700"/></svg></button>
<button class="tool" aria-label="Arc"><svg viewBox="0 0 16 16"><path d="M3 3h8" stroke="#2447ce" stroke-width="2"/><circle cx="3" cy="3" r="1.800" fill="#249840"/><circle cx="3" cy="13" r="1.800" fill="#249840"/></svg></button>
<button class="tool" aria-label="Polygon"><svg viewBox="0 0 16 16"><path d="M3 3l5 1 6-1v10l-6-1-5 1z" fill="#8da2ef" stroke="#2447ce" stroke-width="1.500"/></svg></button>
<button class="tool" aria-label="Text"><svg viewBox="0 0 16 16"><path d="M3 5V3h10v2M8 3v10M6 13h4" fill="none" stroke="#333" stroke-width="1.700"/></svg></button><i class="bar-b"></i>
<button class="tool" aria-label="Dimension"><svg viewBox="0 0 16 16"><path d="M2 5v10" stroke="#2447ce" stroke-width="1.700"/><path d="M3 9h12M6 7L3 9l3 2M7 6V1l3 4" stroke="#333" fill="none"/></svg></button>
<button class="tool" aria-label="Target"><svg viewBox="0 0 16 16"><path d="M0 8h16" stroke="#333"/><circle cx="8" cy="8" r="4.500" fill="#d5cc16" stroke="#222"/><path d="M3.500 8H8v4.500A4.500 4.500 0 0 1 3.500 8z" fill="#222"/></svg></button><i class="bar-b"></i>
<button class="tool" aria-label="Delete"><svg viewBox="0 0 16 16"><path d="M2 3.500h12M4 5h8l-1 10H5zM6 6v8M8 6v8" fill="#ccc" stroke="#666" stroke-width="1.300"/></svg></button><i class="bar-a"></i>
<button class="tool" aria-label="Drill origin"><svg viewBox="0 0 16 16"><path d="M3 1v14M1 3l2-2 2 2M0 13h14" fill="none" stroke="#333"/><circle cx="8" cy="7" r="2.500" fill="#8a8227"/></svg></button>
<button class="tool" aria-label="Grid origin"><svg viewBox="0 0 16 16"><path d="M2 2h12M2 6h12M2 10h12M2 14h12" stroke="#a33" stroke-width="2" stroke-dasharray="2 2"/><circle cx="9" cy="8" r="3" fill="#e22"/></svg></button>
</div>
</div>
<footer class="status flex-shrink-0">
<div class="message">Wrote board file: "/Users/brantwinter/Documents/projects/oshpark_template/_autosave-oshpark_template.kicad_pcb"</div>
<div class="coords d-flex"><span class="c-z">Z 29.39</span><span class="c-xy">X 5.280000  Y 3.970000</span><span class="c-d">dx 5.280000  dy 3.970000  dist 6.6060</span><span>grid X 0.010000  Y 0.010000</span></div>
</footer>
</main>
</body>
</html>
